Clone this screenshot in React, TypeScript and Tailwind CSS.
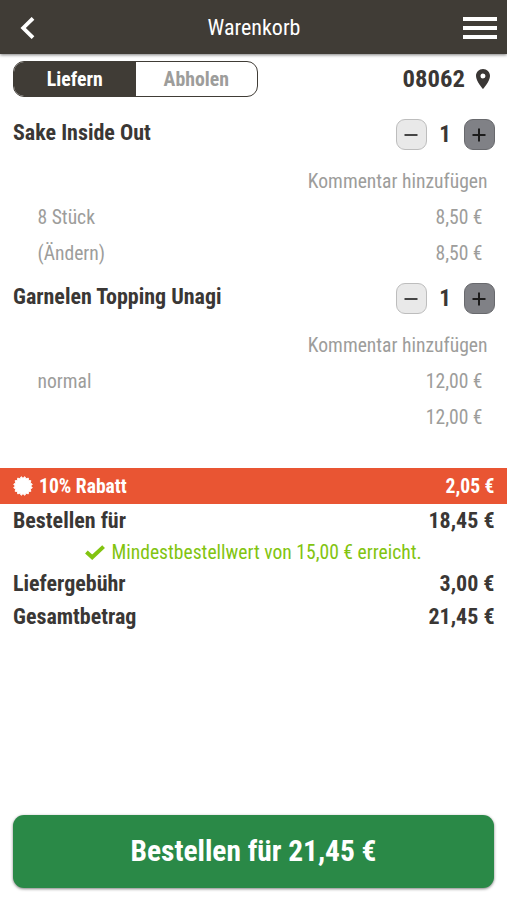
import React, { useState } from "react";

type CartOption = {
  label: string;
  price: string;
};

type CartItemType = {
  name: string;
  count: number;
  options: CartOption[];
};

const cartItems: CartItemType[] = [
  {
    name: "Sake Inside Out",
    count: 1,
    options: [
      { label: "8 Stück", price: "8,50 €" },
      { label: "(Ändern)", price: "8,50 €" },
    ],
  },
  {
    name: "Garnelen Topping Unagi",
    count: 1,
    options: [
      { label: "normal", price: "12,00 €" },
      { label: "", price: "12,00 €" },
    ],
  },
];

// badge with 16 rounded teeth
const badgePoints = Array.from({ length: 32 }, (_, i) => {
  const r = i % 2 === 0 ? 9.5 : 7.7;
  const a = (i * Math.PI) / 16 + Math.PI / 16;
  return `${(10 + r * Math.cos(a)).toFixed(2)},${(10 + r * Math.sin(a)).toFixed(2)}`;
}).join(" ");

const Header = () => (
  <header className="relative flex h-[54px] items-center justify-between bg-[#403c36] pt-[2px] pl-5 pr-[10px] shadow-[0_1px_3px_rgba(0,0,0,0.5)]">
    <button aria-label="Zurück">
      <svg width="15" height="22" viewBox="0 0 15 22" fill="none" stroke="#fff" strokeWidth="3.8">
        <path d="M13 1.3L3.2 11L13 20.7" />
      </svg>
    </button>
    <h1 className="absolute top-[11px] left-[254px] -translate-x-1/2 text-[22px] leading-[33px] text-white">Warenkorb</h1>
    <button aria-label="Menü" className="flex flex-col gap-[5px]">
      <span className="h-1 w-[34px] bg-white" />
      <span className="h-1 w-[34px] bg-white" />
      <span className="h-1 w-[34px] bg-white" />
    </button>
  </header>
);

const Stepper = ({ count }: { count: number }) => (
  <div className="flex h-[31px] items-center">
    <button className="flex h-[31px] w-[31px] items-center justify-center rounded-[9px] border border-[#bdbdbd] bg-[#e9e9e9]">
      <svg width="14" height="14" stroke="#333" strokeWidth="1.8">
        <path d="M0.5 7H13.5" />
      </svg>
    </button>
    <span className="w-[37px] pt-[2px] text-center text-[23px] font-bold">{count}</span>
    <button className="flex h-[31px] w-[31px] items-center justify-center rounded-[9px] border border-[#68696d] bg-[#808186]">
      <svg width="14" height="14" stroke="#1c1c1c" strokeWidth="2">
        <path d="M0.5 7H13.5M7 0.5V13.5" />
      </svg>
    </button>
  </div>
);

const CartItem = ({ item }: { item: CartItemType }) => (
  <li>
    <div className="flex h-14 items-start justify-between pt-3 pl-[13px] pr-[12.5px]">
      <h2 className="text-[22px] leading-[27px] font-bold">{item.name}</h2>
      <Stepper count={item.count} />
    </div>
    <div className="flex h-9 items-center justify-end pt-[2px] pr-[19.5px] text-[19.6px] text-[#9d9d9b]">Kommentar hinzufügen</div>
    {item.options.map((option, i) => (
      <div key={i} className="flex h-9 items-center justify-between pt-[2px] pl-[37.5px] pr-[24.5px] text-[19.6px] text-[#9d9d9b]">
        <span>{option.label}</span>
        <span>{option.price}</span>
      </div>
    ))}
  </li>
);

const TotalRow = ({ label, value }: { label: string; value: string }) => (
  <div className="flex h-[33px] items-center justify-between pl-[13px] pr-[12.5px] text-[22px] font-bold">
    <span>{label}</span>
    <span>{value}</span>
  </div>
);

export default function App() {
  const [delivery, setDelivery] = useState(true);

  return (
    <div className="flex h-[900px] w-[507px] flex-col overflow-hidden bg-white font-['Roboto_Condensed','Roboto',sans-serif] [font-stretch:75%] whitespace-nowrap text-[#3a3735]">
      <Header />
      <div className="mt-[7px] flex h-9 items-center justify-between pl-[13px] pr-[17px]">
        <div className="flex h-9 w-[245px] overflow-hidden rounded-[11px] border border-[#403c36] text-[19.8px] font-bold">
          <button onClick={() => setDelivery(true)} className={`w-1/2 pt-[2px] ${delivery ? "bg-[#403c36] text-white" : "text-[#9d9d9b]"}`}>
            Liefern
          </button>
          <button onClick={() => setDelivery(false)} className={`w-1/2 pt-[2px] ${delivery ? "text-[#9d9d9b]" : "bg-[#403c36] text-white"}`}>
            Abholen
          </button>
        </div>
        <div className="flex items-center gap-[11px] text-[24.7px] font-bold">
          <span>08062</span>
          <svg width="14" height="20" viewBox="5 2 14 20" fill="currentColor">
            <path d="M12 2C8.13 2 5 5.13 5 9c0 5.25 7 13 7 13s7-7.75 7-13c0-3.87-3.13-7-7-7zm0 9.5a2.5 2.5 0 1 1 0-5 2.5 2.5 0 0 1 0 5z" />
          </svg>
        </div>
      </div>

      <ul className="mt-[10px]">
        {cartItems.map((item) => (
          <CartItem key={item.name} item={item} />
        ))}
      </ul>

      <div className="mt-[33px] flex h-9 items-center justify-between bg-[#e95533] pl-[13px] pr-[12.5px] text-[19.6px] font-bold text-white">
        <div className="flex items-center gap-[6px]">
          <svg width="20" height="20" viewBox="0 0 20 20" fill="currentColor" stroke="currentColor" strokeWidth="1" strokeLinejoin="round">
            <polygon points={badgePoints} />
          </svg>
          <span className="pt-[2px]">10% Rabatt</span>
        </div>
        <span className="pt-[2px]">2,05 €</span>
      </div>
      <TotalRow label="Bestellen für" value="18,45 €" />
      <div className="flex h-[30px] items-center justify-center gap-[6px] text-[19.6px] text-[#82c410]">
        <svg width="20" height="15" viewBox="0 0 20 15" fill="none" stroke="currentColor" strokeWidth="4">
          <path d="M1.4 7L7.2 12.2L18.6 1.6" />
        </svg>
        <span className="pt-px">Mindestbestellwert von 15,00 € erreicht.</span>
      </div>
      <TotalRow label="Liefergebühr" value="3,00 €" />
      <TotalRow label="Gesamtbetrag" value="21,45 €" />

      <button className="mx-[13px] mt-auto mb-[12px] h-[73px] rounded-[11px] bg-[#2a8947] text-[29.4px] font-bold text-white shadow-[0_1px_3px_rgba(0,0,0,0.5)]">
        Bestellen für 21,45 €
      </button>
    </div>
  );
}
